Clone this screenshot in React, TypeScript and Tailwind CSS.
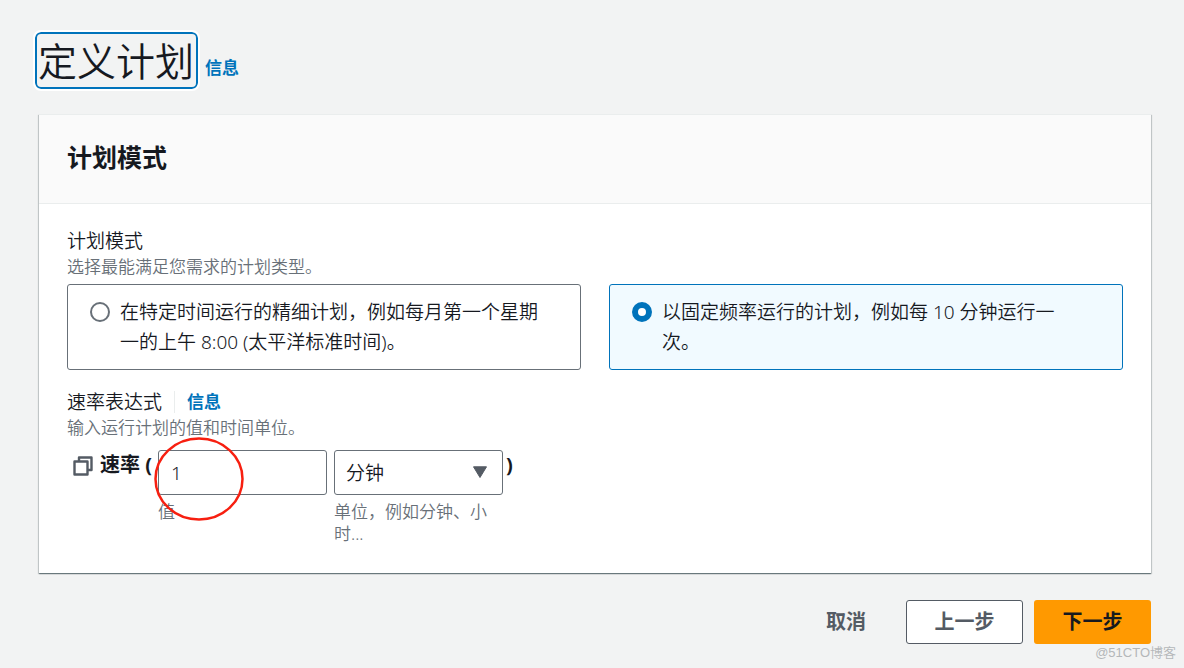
import { useState } from "react";

function InfoLink() {
  return (
    <a href="#info" className="text-[17px] leading-[22px] font-bold text-[#0073bb]">
      信息
    </a>
  );
}

type ModeOptionProps = {
  text: string;
  value: string;
  selected: boolean;
  onSelect: (value: string) => void;
};

function ModeOption({ text, value, selected, onSelect }: ModeOptionProps) {
  return (
    <label
      className={`flex flex-1 items-start gap-2.5 rounded-[3px] border py-3 pr-8 pl-[22px] ${
        selected ? "border-[#0073bb] bg-[#f1faff]" : "border-[#687078] bg-white"
      }`}
    >
      <input
        type="radio"
        name="mode"
        value={value}
        checked={selected}
        onChange={() => onSelect(value)}
        className="mt-[5px] size-5 shrink-0 appearance-none rounded-full border-2 border-[#687078] bg-white checked:border-[6px] checked:border-[#0073bb]"
      />
      <span className="text-[19px] leading-[30px]">{text}</span>
    </label>
  );
}

export default function App() {
  const [mode, setMode] = useState("rate");
  const [amount, setAmount] = useState("1");

  return (
    <main className="relative min-h-screen bg-[#f2f3f3] pt-8 pr-[33px] pb-6 pl-[39px] font-['Noto_Sans','Noto_Sans_CJK_SC',sans-serif] font-[350] text-[#16191f]">
      <header className="-ml-1 flex items-end gap-[7px]">
        <h1 className="rounded-md border-2 border-[#0073bb] pr-0.5 pl-px text-[39px] leading-[53px] font-[350] outline-2 outline-white">
          定义计划
        </h1>
        <span className="flex pb-2.5">
          <InfoLink />
        </span>
      </header>

      <section className="mt-[25px] bg-white shadow-[0_1px_1px_0_rgba(0,28,36,0.4),1px_1px_1px_0_rgba(0,28,36,0.15),-1px_1px_1px_0_rgba(0,28,36,0.15)]">
        <div className="border-y border-[#eaeded] bg-[#fafafa] px-7 pt-6 pb-7">
          <h2 className="text-[25px] leading-9 font-bold">计划模式</h2>
        </div>

        <div className="px-7 pt-[22px] pb-7">
          <fieldset>
            <legend className="text-[19px] leading-[30px]">计划模式</legend>
            <p className="text-[17px] leading-[22px] text-[#687078]">选择最能满足您需求的计划类型。</p>
            <div className="mt-1.5 flex gap-7">
              <ModeOption
                value="cron"
                text="在特定时间运行的精细计划，例如每月第一个星期一的上午 8:00 (太平洋标准时间)。"
                selected={mode === "cron"}
                onSelect={setMode}
              />
              <ModeOption
                value="rate"
                text="以固定频率运行的计划，例如每 10 分钟运行一次。"
                selected={mode === "rate"}
                onSelect={setMode}
              />
            </div>
          </fieldset>

          <div className="mt-[17px] flex items-center">
            <h3 className="text-[19px] leading-[30px] font-[350]">速率表达式</h3>
            <span className="ml-3 flex border-l border-[#eaeded] pl-3">
              <InfoLink />
            </span>
          </div>
          <p className="text-[17px] leading-[22px] text-[#687078]">输入运行计划的值和时间单位。</p>

          <div className="mt-[11px] flex items-start">
            <button type="button" aria-label="复制" className="mt-1.5 ml-1.5 shrink-0 text-[#545b64]">
              <svg viewBox="0 0 20 20" className="size-5" fill="none" stroke="currentColor" strokeWidth="2.4" strokeLinejoin="round">
                <rect x="1.5" y="5.5" width="13" height="13" />
                <path d="M6 5.5V1.5H18.5V14H14.5" />
              </svg>
            </button>
            <span className="ml-[7px] text-[20px] leading-[30px] font-bold whitespace-nowrap">速率 (</span>

            <div className="relative ml-1.5 w-[169px]">
              <input
                id="amount"
                type="text"
                value={amount}
                onChange={(event) => setAmount(event.target.value)}
                className="block h-[45px] w-full rounded-[3px] border border-[#687078] bg-white px-3 text-[19px] leading-[30px]"
              />
              <label htmlFor="amount" className="mt-1.5 block text-[17px] leading-[22px] text-[#687078]">
                值
              </label>
              <svg viewBox="0 0 90 84" className="pointer-events-none absolute -top-[13px] -left-1 h-[84px] w-[90px]" fill="none" aria-hidden="true">
                <ellipse cx="45" cy="42" rx="43.5" ry="40.5" stroke="#f71f10" strokeWidth="2.5" />
              </svg>
            </div>

            <div className="ml-[7px] w-[169px]">
              <div className="relative">
                <select
                  id="unit"
                  className="block h-[45px] w-full appearance-none rounded-[3px] border border-[#687078] bg-white px-[11px] text-[19px] leading-[30px]"
                >
                  <option>分钟</option>
                  <option>小时</option>
                  <option>天</option>
                </select>
                <svg viewBox="0 0 14 12" className="pointer-events-none absolute top-4 right-4 h-3 w-3.5" fill="#545b64" stroke="#545b64" strokeLinejoin="round" aria-hidden="true">
                  <path d="M.5.8h13L7 11.5z" />
                </svg>
              </div>
              <label htmlFor="unit" className="mt-1.5 block text-[17px] leading-[22px] text-[#687078]">
                单位，例如分钟、小时...
              </label>
            </div>
            <span className="ml-[3px] text-[20px] leading-[30px] font-bold">)</span>
          </div>
        </div>
      </section>

      <footer className="mt-[27px] flex justify-end gap-[11px] text-[20px] leading-[30px] font-bold">
        <button type="button" className="h-11 px-[29px] text-[#545b64]">
          取消
        </button>
        <button type="button" className="h-11 w-[117px] rounded-[3px] border border-[#545b64] bg-white text-[#545b64]">
          上一步
        </button>
        <button type="button" className="h-11 w-[117px] rounded-[3px] bg-[#ff9900] text-[#16191f]">
          下一步
        </button>
      </footer>

      <span className="absolute right-2 bottom-[5px] font-['Liberation_Sans','Noto_Sans_CJK_SC',sans-serif] text-[13px] leading-5 text-[#b4b7b9]">
        @51CTO博客
      </span>
    </main>
  );
}
